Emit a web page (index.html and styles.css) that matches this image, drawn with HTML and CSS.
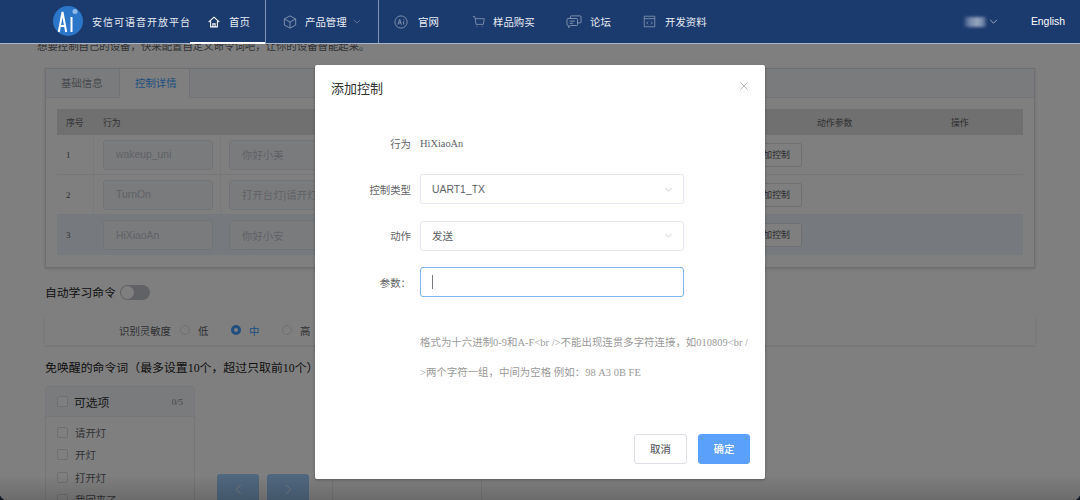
FILE: index.html
```html
<!DOCTYPE html>
<html lang="zh">
<head>
<meta charset="utf-8">
<title>添加控制</title>
<link rel="stylesheet" href="styles.css">
</head>
<body>
<div class="page">
  <header class="nav">
    <div class="brand">
      <svg class="logo" viewBox="0 0 30 30" width="30" height="30"><circle cx="15" cy="15" r="15" fill="#2b76c9"/><circle cx="22" cy="5.500" r="2.500" fill="#8fb9e6"/><path d="M5.800 26 L9.500 6 L13.200 26 M7.300 20 H11.700 M18.500 11 V26" fill="none" stroke="#fff" stroke-width="2"/></svg>
      <span class="brand-name">安信可语音开放平台</span>
    </div>
    <a class="nav-item home">
      <svg class="ico" viewBox="0 0 16 16" width="12" height="12"><path d="M1 8 L8 1.500 L15 8 M3.500 7 V14.500 H12.500 V7 M6.500 14.500 V10.500 H9.500 V14.500" fill="none" stroke="#fff" stroke-width="1.400"/></svg>
      <span>首页</span>
    </a>
    <a class="nav-item product">
      <svg class="ico" viewBox="0 0 16 16" width="14" height="14"><path d="M8 1 L14.500 4.500 V11.500 L8 15 L1.500 11.500 V4.500 Z M1.500 4.500 L8 8 L14.500 4.500 M8 8 V15" fill="none" stroke="#8a9ab5" stroke-width="1"/></svg>
      <span>产品管理</span>
      <svg class="caret" viewBox="0 0 10 6" width="8" height="5"><path d="M1 1 L5 5 L9 1" fill="none" stroke="#6f83a6" stroke-width="1"/></svg>
    </a>
    <a class="nav-item site">
      <svg class="ico" viewBox="0 0 16 16" width="14" height="14"><circle cx="8" cy="8" r="7" fill="none" stroke="#8a9ab5" stroke-width="1"/><path d="M4.500 11 L6.500 5 L8.500 11 M5.200 9 H7.800 M11 7 V11 M11 5 V5.800" fill="none" stroke="#8a9ab5" stroke-width="1"/></svg>
      <span>官网</span>
    </a>
    <a class="nav-item shop">
      <svg class="ico" viewBox="0 0 16 16" width="13" height="13"><path d="M1 2 H3.500 L5 11.500 H14 M4 4.500 H15 L14 11.500 M5.500 14 H6.500 M12 14 H13" fill="none" stroke="#8a9ab5" stroke-width="1"/></svg>
      <span>样品购买</span>
    </a>
    <a class="nav-item forum">
      <svg class="ico" viewBox="0 0 18 16" width="16" height="14"><path d="M2 4 H12 Q13 4 13 5 V11 Q13 12 12 12 H5 L3 14.500 V12 H2 Q1 12 1 11 V5 Q1 4 2 4 Z M5 4 V2 Q5 1 6 1 H16 Q17 1 17 2 V8 Q17 9 16 9 H13 M4 7 H10 M4 9.500 H8" fill="none" stroke="#8a9ab5" stroke-width="1"/></svg>
      <span>论坛</span>
    </a>
    <a class="nav-item docs">
      <svg class="ico" viewBox="0 0 16 16" width="13" height="13"><path d="M1.500 1.500 H14.500 V14.500 H1.500 Z M1.500 4.500 H14.500 M6 8 L4.500 9.800 L6 11.500 M10 8 L11.500 9.800 L10 11.500" fill="none" stroke="#8a9ab5" stroke-width="1"/></svg>
      <span>开发资料</span>
    </a>
    <div class="nav-right">
      <span class="blur-user"></span>
      <svg class="caret-user" viewBox="0 0 10 6" width="9" height="5"><path d="M1 1 L5 5 L9 1" fill="none" stroke="#b4c0d4" stroke-width="1"/></svg>
      <span class="lang">English</span>
    </div>
  </header>

  <main class="content">
    <p class="intro">想要控制自己的设备，快来配置自定义命令词吧，让你的设备智能起来。</p>
    <section class="card">
      <div class="tabs">
        <span class="tab">基础信息</span>
        <span class="tab active">控制详情</span>
      </div>
      <div class="table-wrap">
        <div class="row head">
          <div class="c-no">序号</div><div class="c-act">行为</div><div class="c-word"></div><div class="c-ctl"></div><div class="c-param">动作参数</div><div class="c-op">操作</div>
        </div>
        <div class="row">
          <div class="c-no">1</div><div class="c-act"><span class="fake-input">wakeup_uni</span></div><div class="c-word"><span class="fake-input">你好小美</span></div><div class="c-ctl"><span class="add-btn">添加控制</span></div><div class="c-param"></div><div class="c-op"></div>
        </div>
        <div class="row">
          <div class="c-no">2</div><div class="c-act"><span class="fake-input">TurnOn</span></div><div class="c-word"><span class="fake-input">打开台灯|请开灯</span></div><div class="c-ctl"><span class="add-btn">添加控制</span></div><div class="c-param"></div><div class="c-op"></div>
        </div>
        <div class="row current">
          <div class="c-no">3</div><div class="c-act"><span class="fake-input">HiXiaoAn</span></div><div class="c-word"><span class="fake-input">你好小安</span></div><div class="c-ctl"><span class="add-btn">添加控制</span></div><div class="c-param"></div><div class="c-op"></div>
        </div>
      </div>
    </section>

    <div class="auto-learn">
      <span>自动学习命令</span>
      <span class="switch"><i class="knob"></i></span>
    </div>

    <div class="sense">
      <span class="sense-label">识别灵敏度</span>
      <span class="radio"></span><span class="radio-text">低</span>
      <span class="radio on"></span><span class="radio-text on-text">中</span>
      <span class="radio"></span><span class="radio-text">高</span>
    </div>

    <h3 class="free-title">免唤醒的命令词（最多设置10个，超过只取前10个）</h3>

    <div class="transfer">
      <div class="panel">
        <div class="panel-head">
          <span class="check"></span><span class="panel-title">可选项</span><span class="count">0/5</span>
        </div>
        <ul class="panel-list">
          <li><span class="check"></span>请开灯</li>
          <li><span class="check"></span>开灯</li>
          <li><span class="check"></span>打开灯</li>
          <li><span class="check"></span>我回来了</li>
        </ul>
      </div>
      <div class="arrows">
        <span class="arrow"><svg viewBox="0 0 8 12" width="7" height="11"><path d="M6.500 1 L1.500 6 L6.500 11" fill="none" stroke="#fff" stroke-width="1"/></svg></span>
        <span class="arrow"><svg viewBox="0 0 8 12" width="7" height="11"><path d="M1.500 1 L6.500 6 L1.500 11" fill="none" stroke="#fff" stroke-width="1"/></svg></span>
      </div>
      <div class="panel right-panel"></div>
    </div>
  </main>

  <div class="mask"></div>

  <div class="dialog">
    <div class="dialog-head">
      <span class="dialog-title">添加控制</span>
      <svg class="close" viewBox="0 0 10 10" width="8" height="8"><path d="M.5 .5 L9.500 9.500 M9.500 .5 L.5 9.500" fill="none" stroke="#a8abb2" stroke-width="1"/></svg>
    </div>
    <div class="form">
      <div class="form-row plain"><label>行为</label><span class="form-value">HiXiaoAn</span></div>
      <div class="form-row">
        <label>控制类型</label>
        <div class="select"><span>UART1_TX</span><svg viewBox="0 0 10 6" width="9" height="5"><path d="M1 1 L5 5 L9 1" fill="none" stroke="#c0c4cc" stroke-width="1"/></svg></div>
      </div>
      <div class="form-row">
        <label>动作</label>
        <div class="select"><span>发送</span><svg viewBox="0 0 10 6" width="9" height="5"><path d="M1 1 L5 5 L9 1" fill="none" stroke="#c0c4cc" stroke-width="1"/></svg></div>
      </div>
      <div class="form-row">
        <label>参数：</label>
        <div class="select focused"><i class="cursor"></i></div>
      </div>
      <p class="help">格式为十六进制0-9和A-F&lt;br /&gt;不能出现连贯多字符连接，如010809&lt;br /<br>&gt;两个字符一组，中间为空格 例如：98 A3 0B FE</p>
    </div>
    <div class="dialog-foot">
      <span class="btn">取消</span>
      <span class="btn primary">确定</span>
    </div>
  </div>
</div>
</body>
</html>
```

FILE: styles.css
```css
* { box-sizing: border-box; }
html, body { margin: 0; padding: 0; }
body {
  width: 1080px;
  height: 500px;
  overflow: hidden;
  font-family: "Liberation Serif", "Noto Sans CJK SC", serif;
  background: #141a24;
}
.page {
  position: relative;
  width: 1080px;
  height: 500px;
  overflow: hidden;
  background: #fff;
  border-radius: 0 0 7px 7px;
}

.nav {
  position: relative;
  z-index: 3;
  display: flex;
  align-items: center;
  height: 44px;
  background: #1b3a6e;
  border-bottom: 1px solid #a9b6cc;
  color: #fff;
  font-size: 10.400px;
  padding-left: 53px;
}
.brand { display: flex; align-items: center; width: 141px; flex: none; }
.logo { flex: none; margin-bottom: 1px; }
.brand-name { margin-left: 9px; font-size: 10px; letter-spacing: 1px; color: #e6ebf3; white-space: nowrap; margin-bottom: 1px; }
.nav-item { display: flex; align-items: center; height: 43px; white-space: nowrap; color: #e9edf4; flex: none; }
.nav-item .ico { flex: none; }
.home { width: 72px; padding-left: 14px; gap: 9px; border-right: 1px solid #8494b3; position: relative; }
.home::after { content: ""; position: absolute; left: -4px; right: 0; bottom: -1px; height: 2px; background: #fff; }
.product { width: 113px; padding-left: 17px; gap: 8px; border-right: 1px solid #8494b3; }
.caret { margin-left: -2px; }
.site { width: 93px; padding-left: 15px; gap: 10px; }
.shop { width: 94px; gap: 8px; }
.forum { width: 77px; gap: 8px; }
.docs { gap: 9px; }
.nav-right { margin-left: auto; display: flex; align-items: center; padding-right: 15px; }
.blur-user { width: 24px; height: 10px; background: linear-gradient(90deg, #1b3a6e, #6e83a7 25%, #98a7c0 60%, #6e83a7 85%, #1b3a6e); filter: blur(1.500px); }
.caret-user { margin-left: 2px; }
.lang { margin-left: 33px; margin-bottom: 1px; font-family: "Liberation Sans", sans-serif; font-size: 10.400px; color: #fff; }

.content { padding: 0 45px; color: #303133; }
.intro { margin: -5px 0 0 -8px; height: 24px; font-size: 10.400px; line-height: 16px; color: #606266; white-space: nowrap; }
.card {
  margin-top: 5px;
  width: 990px;
  height: 200px;
  border: 1px solid #dcdfe6;
  box-shadow: 0 1px 3px rgba(0,0,0,.15);
  background: #fff;
}
.tabs { display: flex; height: 29px; background: #f5f7fa; border-bottom: 1px solid #e4e7ed; font-size: 10.400px; }
.tab { width: 73px; padding-left: 15px; line-height: 29px; color: #909399; }
.tab.active { width: 71px; padding-left: 15px; background: #fff; color: #409eff; height: 29px; border-left: 1px solid #e4e7ed; border-right: 1px solid #e4e7ed; }
.table-wrap { margin: 11px 11px 0; width: 966px; font-size: 8.900px; }
.row { display: flex; height: 40px; align-items: stretch; border-bottom: 1px solid #ebeef5; }
.row > div { display: flex; align-items: center; }
.row.head { height: 26px; background: #e0e0e0; border-bottom: 0; color: #606266; }
.row.current { background: #ecf5ff; border-bottom: 0; }
.c-no { width: 37px; padding-left: 9px; color: #606266; flex: none; }
.c-act { width: 127px; padding-left: 9px; flex: none; }
.row:not(.head) .c-no, .row:not(.head) .c-act { border-right: 1px solid #f1f3f7; }
.c-word { width: 120px; padding-left: 8px; flex: none; }
.c-ctl { width: 467px; justify-content: flex-end; flex: none; }
.c-param { width: 90px; padding-left: 9px; flex: none; }
.c-op { flex: 1; padding-left: 53px; }
.fake-input {
  display: flex;
  align-items: center;
  width: 110px;
  height: 30px;
  padding-left: 12px;
  border: 1px solid #e4e7ed;
  border-radius: 3px;
  background: #f5f7fa;
  color: #c0c4cc;
  font-family: "Liberation Sans", "Noto Sans CJK SC", sans-serif;
  font-size: 10.400px;
  white-space: nowrap;
  overflow: hidden;
}
.c-word .fake-input { width: 140px; flex: none; }
.add-btn {
  display: block;
  width: 73px;
  height: 24px;
  line-height: 22px;
  text-align: right;
  padding-right: 11px;
  border: 1px solid #dcdfe6;
  border-radius: 2px;
  background: #fff;
  color: #505256;
  font-size: 8.900px;
  margin-right: 6px;
}

.auto-learn { display: flex; align-items: center; gap: 4px; margin-top: 14px; height: 20px; font-size: 11.800px; color: #222; }
.switch { position: relative; display: block; width: 30px; height: 15px; border-radius: 8px; background: #c0c4cc; }
.knob { position: absolute; left: 1px; top: 1px; width: 13px; height: 13px; border-radius: 50%; background: #fff; }
.sense {
  display: flex;
  align-items: center;
  margin-top: 13px;
  width: 990px;
  height: 30px;
  padding-left: 74px;
  background: #fff;
  box-shadow: 0 1px 3px rgba(0,0,0,.12);
  font-size: 10.400px;
  color: #606266;
}
.sense-label { width: 61px; flex: none; }
.radio { display: block; width: 10px; height: 10px; border-radius: 50%; border: 1px solid #dcdfe6; background: #fff; flex: none; }
.radio.on { border: 3px solid #409eff; background: #fff; }
.radio-text { width: 41px; padding-left: 8px; flex: none; }
.on-text { color: #409eff; }
.free-title { margin: 16px 0 0; height: 15px; font-size: 11.900px; line-height: 15px; font-weight: 400; color: #222; white-space: nowrap; }
.transfer { display: flex; margin-top: 10px; align-items: flex-start; }
.panel { width: 150px; height: 140px; border: 1px solid #ebeef5; border-radius: 3px; background: #fff; flex: none; }
.panel-head { display: flex; align-items: center; height: 30px; padding: 0 11px; background: #f5f7fa; border-bottom: 1px solid #ebeef5; font-size: 11.800px; color: #303133; }
.panel-title { margin-left: 6px; }
.count { margin-left: auto; font-size: 8.900px; color: #909399; }
.check { display: inline-block; width: 11px; height: 11px; border: 1px solid #dcdfe6; border-radius: 2px; background: #fff; flex: none; }
.panel-list { list-style: none; margin: 0; padding: 4px 0 0 11px; font-size: 10.400px; color: #606266; }
.panel-list li { display: flex; align-items: center; gap: 7px; height: 22.500px; }
.arrows { display: flex; gap: 8px; margin: 88px 0 0 22px; flex: none; }
.arrow { display: flex; align-items: center; justify-content: center; width: 42px; height: 30px; border-radius: 3px; background: #a0cfff; }
.right-panel { margin-left: 23px; height: 140px; }

.mask {
  position: absolute;
  inset: 0;
  z-index: 1;
  background: linear-gradient(to bottom, rgba(0,0,0,.5) 95%, rgba(0,0,0,.58) 100%);
}

.dialog {
  position: absolute;
  z-index: 2;
  left: 315px;
  top: 65px;
  width: 450px;
  height: 414px;
  background: #fff;
  border-radius: 2px;
  box-shadow: 0 1px 3px rgba(0,0,0,.3);
  display: flex;
  flex-direction: column;
}
.dialog-head { display: flex; justify-content: space-between; flex: none; padding: 15px 17px 0 16px; height: 63px; }
.dialog-title { font-size: 13px; line-height: 17px; color: #303133; }
.close { margin-top: 2px; }
.form { flex: 1; font-size: 10.400px; color: #606266; }
.form-row { display: flex; align-items: center; height: 30px; margin-bottom: 16.500px; }
.form-row.plain { margin-bottom: 16px; }
.form-row label { width: 96px; text-align: right; flex: none; color: #606266; }
.form-value { margin-left: 9px; }
.select {
  display: flex;
  align-items: center;
  justify-content: space-between;
  width: 264px;
  height: 30px;
  margin-left: 9px;
  padding: 0 10px 0 11px;
  border: 1px solid #e4e7ed;
  border-radius: 3px;
  font-family: "Liberation Sans", "Noto Sans CJK SC", sans-serif;
  font-size: 10.400px;
  color: #606266;
}
.select.focused { border-color: #7db7f0; }
.cursor { display: block; width: 1px; height: 14px; background: #77797e; }
.help {
  margin: 31px 0 0 105px;
  font-size: 10.400px;
  letter-spacing: .05px;
  line-height: 29.500px;
  color: #999;
  white-space: nowrap;
}
.dialog-foot { display: flex; justify-content: flex-end; gap: 11px; padding: 0 15px 15px; flex: none; }
.btn {
  display: block;
  width: 53px;
  height: 30px;
  line-height: 29px;
  text-align: center;
  border: 1px solid #dcdfe6;
  border-radius: 3px;
  font-size: 10.400px;
  font-weight: 500;
  color: #606266;
  background: #fff;
}
.btn.primary { width: 52px; background: #5ba0fa; border-color: #5ba0fa; color: #fff; }
```
